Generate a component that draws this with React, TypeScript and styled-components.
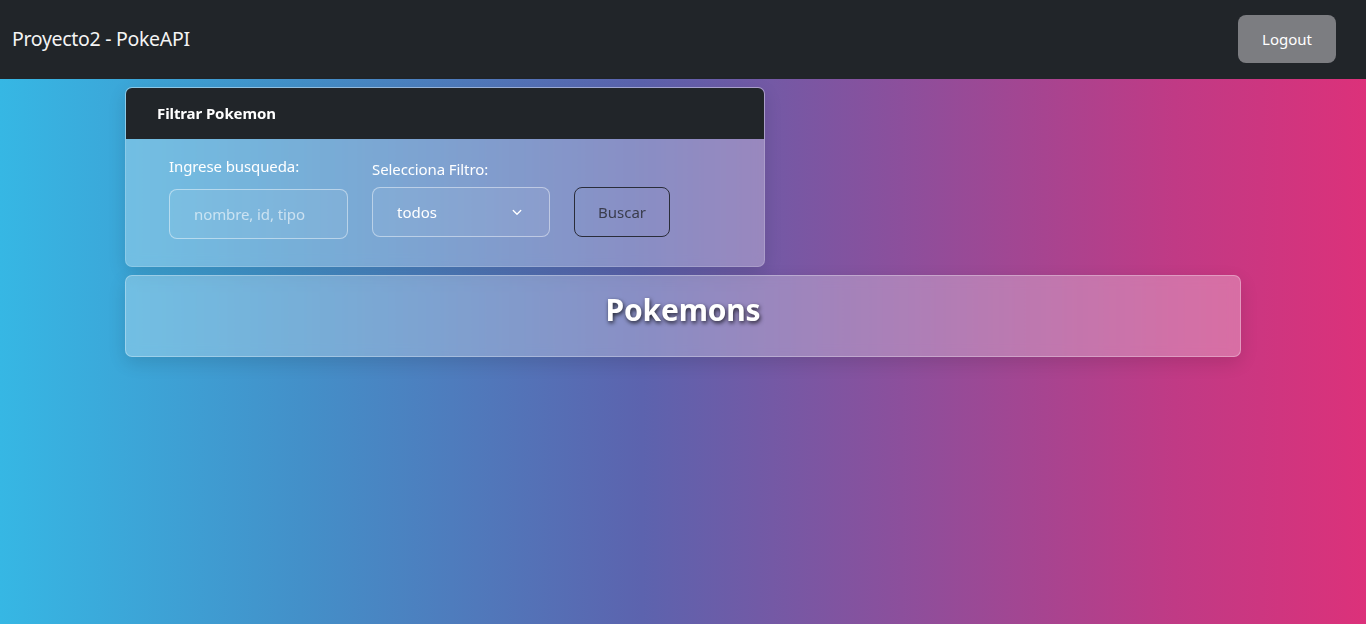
import React from "react";
import styled, { createGlobalStyle } from "styled-components";

const GlobalStyle = createGlobalStyle`
  html, body { margin: 0; padding: 0; }
  body {
    font-family: "Noto Sans", "Open Sans", sans-serif;
    background: #212529;
  }
  * { box-sizing: border-box; }
`;

const Page = styled.div`
  min-height: 100vh;
  display: flex;
  flex-direction: column;
`;

const NavBar = styled.nav`
  height: 79px;
  background: #212529;
  display: flex;
  align-items: center;
  justify-content: space-between;
  padding: 0 30px 2px 12px;
`;

const Brand = styled.span`
  color: #f4f4f4;
  font-size: 19.5px;
  letter-spacing: -0.3px;
`;

const LogoutButton = styled.button`
  width: 98px;
  height: 48px;
  border: none;
  border-radius: 8px;
  background: #7c7d81;
  color: #fff;
  font-family: inherit;
  font-size: 15px;
`;

const Main = styled.main`
  flex: 1;
  background: linear-gradient(90deg, #36b7e4 0%, #4390c9 22%, #5c63ae 47%, #8c4f9c 66%, #c03a85 86%, #dc317a 100%);
  padding: 8px 125px 40px;
  display: flex;
  flex-direction: column;
  gap: 8px;
`;

const FilterCard = styled.section`
  width: 640px;
  border-radius: 7px;
  overflow: hidden;
  background: rgba(255, 255, 255, 0.28);
  border: 1px solid rgba(255, 255, 255, 0.18);
  box-shadow: 0 6px 18px rgba(0, 0, 0, 0.12);
  backdrop-filter: blur(6px);
`;

const CardHeader = styled.header`
  height: 52px;
  margin: -1px -1px 0;
  background: #212529;
  color: #fff;
  font-weight: 700;
  font-size: 15px;
  letter-spacing: -0.1px;
  display: flex;
  align-items: center;
  padding-left: 32px;
`;

const CardBody = styled.div`
  height: 127px;
  display: flex;
  align-items: flex-start;
  gap: 24px;
  padding: 17px 0 0 43px;
`;

const Field = styled.div<{ $offset?: number; $gap: number }>`
  display: flex;
  flex-direction: column;
  gap: ${(p) => p.$gap}px;
  padding-top: ${(p) => p.$offset ?? 0}px;
`;

const Label = styled.label`
  color: #fff;
  font-size: 15px;
  line-height: 20px;
  letter-spacing: -0.1px;
`;

const TextInput = styled.input`
  width: 179px;
  height: 50px;
  border-radius: 8px;
  border: 1px solid rgba(255, 255, 255, 0.45);
  background: rgba(255, 255, 255, 0.06);
  padding: 0 24px;
  font-family: inherit;
  font-size: 15px;
  letter-spacing: -0.1px;
  color: #fff;
  outline: none;
  &::placeholder { color: rgba(255, 255, 255, 0.6); }
`;

const SelectBox = styled.div`
  width: 178px;
  height: 50px;
  border-radius: 8px;
  border: 1px solid rgba(255, 255, 255, 0.45);
  background: rgba(255, 255, 255, 0.06);
  display: flex;
  align-items: center;
  justify-content: space-between;
  padding: 0 26px 0 24px;
  color: #fff;
  font-size: 15px;
`;

const SearchButton = styled.button`
  margin-top: 31px;
  width: 96px;
  height: 50px;
  border-radius: 8px;
  border: 1px solid #2a2d3a;
  background: transparent;
  color: #3a3d4d;
  font-family: inherit;
  font-size: 15px;
`;

const TitleCard = styled.section`
  height: 82px;
  border-radius: 7px;
  background: rgba(255, 255, 255, 0.28);
  border: 1px solid rgba(255, 255, 255, 0.3);
  box-shadow: 0 6px 18px rgba(0, 0, 0, 0.12);
  backdrop-filter: blur(6px);
  display: flex;
  justify-content: center;
  padding-top: 14px;
`;

const Title = styled.h1`
  margin: 0;
  color: #fff;
  font-size: 30px;
  font-weight: 700;
  line-height: 40px;
  letter-spacing: -0.2px;
  text-shadow: 1px 2px 4px rgba(0, 0, 0, 0.75);
`;

const Chevron = () => (
  <svg width="12" height="12" viewBox="0 0 16 16" fill="none">
    <path d="M3 6l5 5 5-5" stroke="#fff" strokeWidth="1.8" strokeLinecap="round" strokeLinejoin="round" />
  </svg>
);

export default function App() {
  return (
    <>
      <GlobalStyle />
      <Page>
        <NavBar>
          <Brand>Proyecto2 - PokeAPI</Brand>
          <LogoutButton>Logout</LogoutButton>
        </NavBar>
        <Main>
          <FilterCard>
            <CardHeader>Filtrar Pokemon</CardHeader>
            <CardBody>
              <Field $gap={13}>
                <Label>Ingrese busqueda:</Label>
                <TextInput placeholder="nombre, id, tipo" />
              </Field>
              <Field $offset={3} $gap={8}>
                <Label>Selecciona Filtro:</Label>
                <SelectBox>
                  <span>todos</span>
                  <Chevron />
                </SelectBox>
              </Field>
              <SearchButton>Buscar</SearchButton>
            </CardBody>
          </FilterCard>
          <TitleCard>
            <Title>Pokemons</Title>
          </TitleCard>
        </Main>
      </Page>
    </>
  );
}
